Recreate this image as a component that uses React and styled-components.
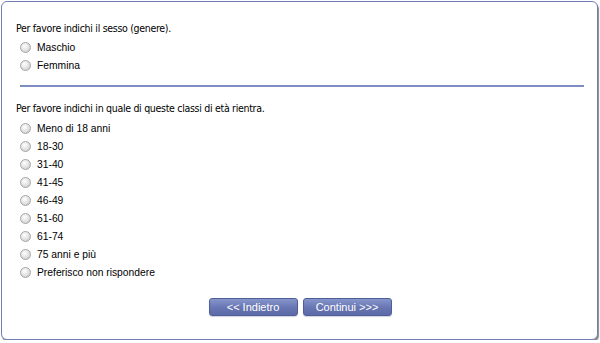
import React from "react";
import styled, { createGlobalStyle } from "styled-components";

const Global = createGlobalStyle`
  html, body { margin: 0; padding: 0; background: #ffffff; }
  body { font-family: "Liberation Sans", Arial, sans-serif; }
`;

const Panel = styled.div`
  box-sizing: border-box;
  margin: 1px 2px 0 1px;
  width: 597px;
  height: 339px;
  border: 1px solid #6f7fb3;
  border-radius: 6px;
  background: #fff;
  box-shadow: 1px 2px 1px #8a8a8a;
  padding: 19px 15px 0 14px;
  display: flex;
  flex-direction: column;
`;

const Question = styled.div`
  font-family: "DejaVu Sans Condensed", "DejaVu Sans", sans-serif;
  font-size: 10.5px;
  letter-spacing: -0.3px;
  line-height: 14px;
  color: #000;
  margin-bottom: ${(p) => p.$gap}px;
`;

const Option = styled.label`
  display: flex;
  align-items: center;
  height: 18px;
  font-size: 10.3px;
  color: #000;
  padding-left: 4px;
`;

const Radio = styled.span`
  box-sizing: border-box;
  width: 11px;
  height: 11px;
  border-radius: 50%;
  border: 1px solid #a5a5a5;
  background: radial-gradient(circle at 40% 35%, #ffffff 0%, #e6e6e6 45%, #c4c4c4 100%);
  margin-right: 6px;
  flex-shrink: 0;
`;

const Divider = styled.hr`
  border: none;
  height: 2px;
  background: #7d8dc2;
  margin: 11px 0 14px 4px;
  width: 564px;
`;

const Buttons = styled.div`
  display: flex;
  justify-content: center;
  gap: 5px;
  margin-top: 17px;
  padding-left: 2px;
`;

const Button = styled.button`
  width: 89px;
  height: 18px;
  border: 1px solid #4f5e96;
  border-radius: 3px;
  background: linear-gradient(#8695cb, #6776b2 55%, #5c6ba8);
  color: #fff;
  font-family: "Liberation Sans", Arial, sans-serif;
  font-size: 11px;
  padding: 0;
  line-height: 16px;
  box-shadow: 0 1px 1px #cfd3e0;
`;

const sex = ["Maschio", "Femmina"];
const ages = [
  "Meno di 18 anni",
  "18-30",
  "31-40",
  "41-45",
  "46-49",
  "51-60",
  "61-74",
  "75 anni e più",
  "Preferisco non rispondere",
];

export default function App() {
  return (
    <>
      <Global />
      <Panel>
        <Question $gap={3}>Per favore indichi il sesso (genere).</Question>
        {sex.map((s) => (
          <Option key={s}>
            <Radio />
            {s}
          </Option>
        ))}
        <Divider />
        <Question $gap={4}>Per favore indichi in quale di queste classi di età rientra.</Question>
        {ages.map((s) => (
          <Option key={s}>
            <Radio />
            {s}
          </Option>
        ))}
        <Buttons>
          <Button>&lt;&lt; Indietro</Button>
          <Button>Continui &gt;&gt;&gt;</Button>
        </Buttons>
      </Panel>
    </>
  );
}
